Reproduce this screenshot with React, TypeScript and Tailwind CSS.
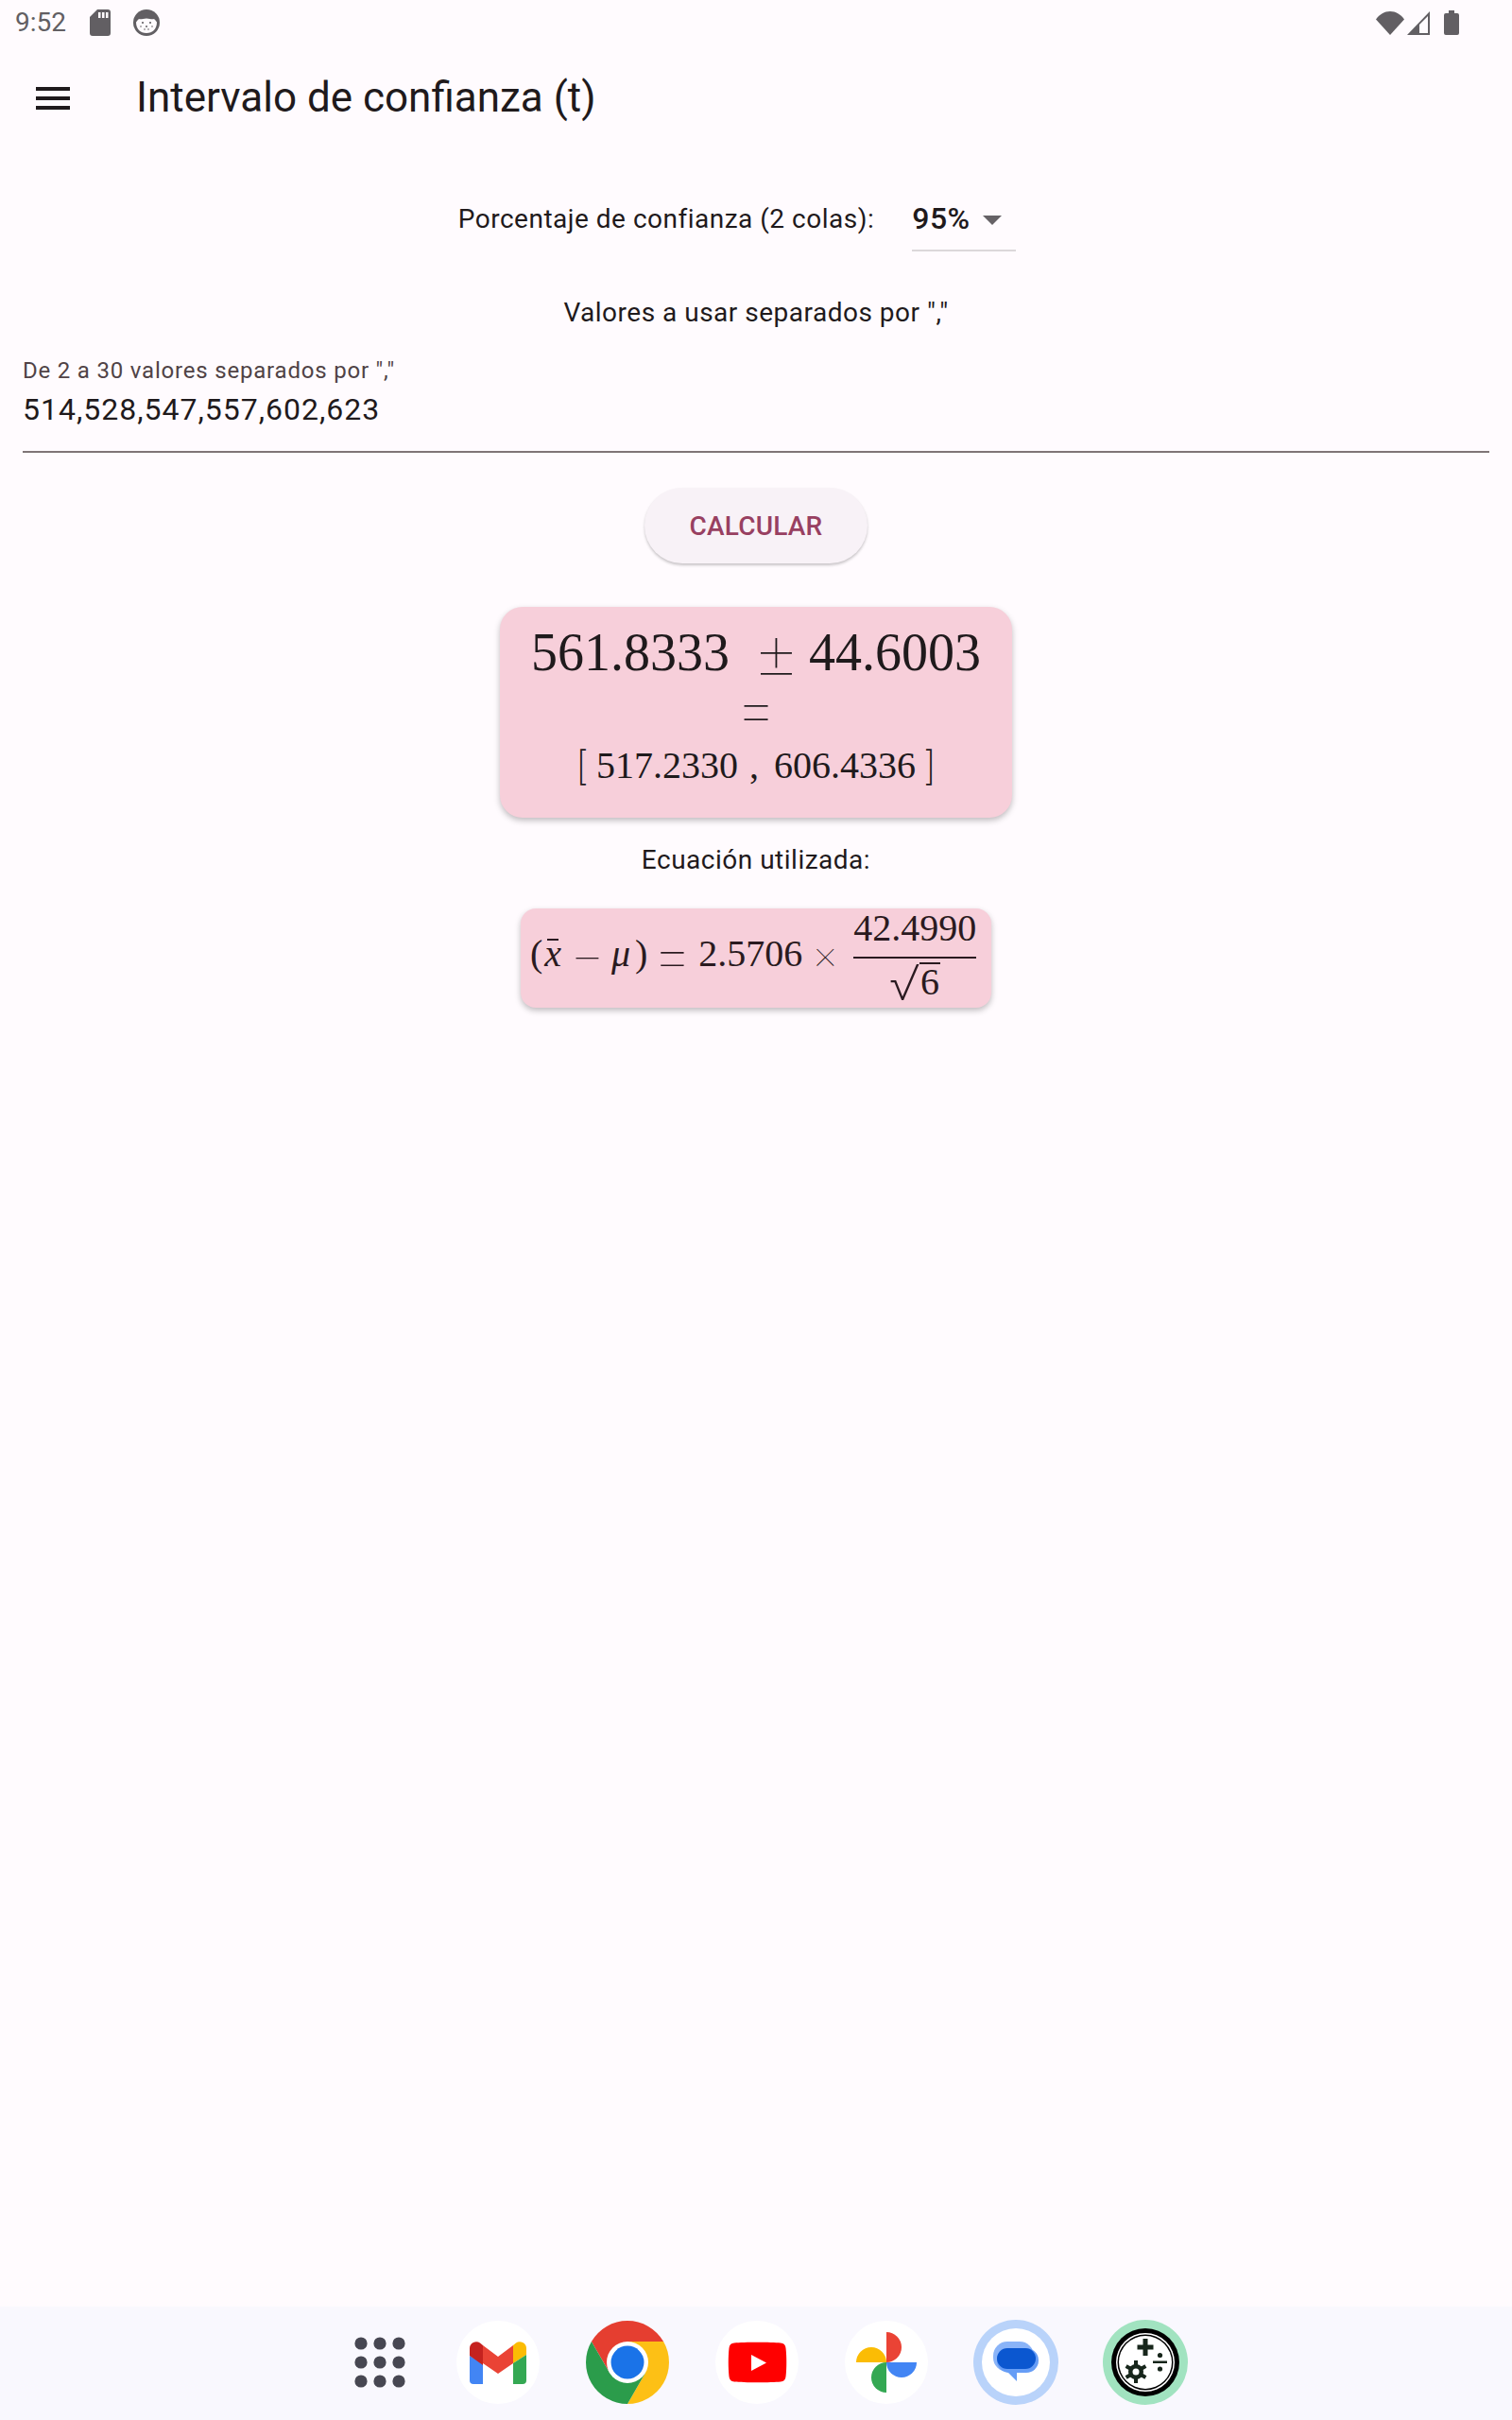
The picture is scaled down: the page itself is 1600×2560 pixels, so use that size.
import React from "react";

const Sd = () => (
  <svg width="22" height="28" viewBox="0 0 22 28" className="ml-[25px]">
    <path fillRule="evenodd" fill="#625f63" d="M8 0H19a3 3 0 0 1 3 3V25a3 3 0 0 1-3 3H3a3 3 0 0 1-3-3V8ZM9 3v6h2.500V3ZM13 3v6h2.500V3ZM17 3v6h2.500V3Z" />
  </svg>
);

const Face = () => (
  <svg width="28" height="28" viewBox="0 0 28 28" className="ml-[24px]">
    <circle cx="14" cy="14" r="14" fill="#625f63" />
    <path d="M3 13.500c1-1.500 2-2.500 3-3.500 2 1 4.500-.5 8-.5s6 1.500 8 .5c1 1 2 2 3 3.500 0 7-4.500 11.500-11 11.500S3 20.500 3 13.500Z" fill="#fffbfe" />
    <g fill="#625f63">
      <circle cx="10" cy="14" r="1.100" />
      <circle cx="18" cy="14" r="1.100" />
      <circle cx="14" cy="18" r="1" />
      <circle cx="8" cy="18" r=".8" />
      <circle cx="20" cy="18" r=".8" />
      <circle cx="12" cy="21" r=".8" />
      <circle cx="16" cy="21" r=".8" />
    </g>
  </svg>
);

const StatusRight = () => (
  <div className="flex items-center">
    <svg width="30" height="25" viewBox="0 0 30 25">
      <path d="M0 8.500C4 3 9 0 15 0s11 3 15 8.500L15 25Z" fill="#625f63" />
    </svg>
    <svg width="24" height="25" viewBox="0 0 24 25" className="ml-[3px]">
      <path fillRule="evenodd" d="M24 0V25H0ZM22 5 13 14V23H22Z" fill="#625f63" />
    </svg>
    <svg width="16" height="26" viewBox="0 0 16 26" className="ml-[15px]">
      <path d="M5 0H11V3H14a2 2 0 0 1 2 2V24a2 2 0 0 1-2 2H2a2 2 0 0 1-2-2V5a2 2 0 0 1 2-2H5Z" fill="#625f63" />
    </svg>
  </div>
);

const AppsGrid = () => (
  <svg width="88" height="88" viewBox="0 0 88 88">
    {[24, 44, 64].flatMap((y) =>
      [24, 44, 64].map((x) => <circle key={`${x}-${y}`} cx={x} cy={y} r="6.600" fill="#474752" />)
    )}
  </svg>
);

const Gmail = () => (
  <svg width="88" height="88" viewBox="0 0 88 88">
    <circle cx="44" cy="44" r="44" fill="#ffffff" />
    <path d="M14 37V63a4 4 0 0 0 4 4H28V45Z" fill="#4285f4" />
    <path d="M14 37V29a7 7 0 0 1 11-5.500L28 26V47Z" fill="#c5221f" />
    <path d="M28 26 44 38 60 26V45L44 56 28 45Z" fill="#ea4335" />
    <path d="M60 26 63 23.500A7 7 0 0 1 74 29V36L60 45Z" fill="#fbbc04" />
    <path d="M60 45 74 36V63a4 4 0 0 1-4 4H60Z" fill="#34a853" />
  </svg>
);

const Chrome = () => (
  <svg width="88" height="88" viewBox="0 0 88 88">
    <path d="M82.100 22A44 44 0 0 0 5.900 22L25 55 44 44Z" fill="#e53e30" />
    <path d="M82.100 22A44 44 0 0 1 44 88L63 55 44 22Z" fill="#fdc015" />
    <path d="M44 88A44 44 0 0 1 5.900 22L25 55H63Z" fill="#2b9c4b" />
    <circle cx="44" cy="44" r="22" fill="#ffffff" />
    <circle cx="44" cy="44" r="17.500" fill="#1a73e8" />
  </svg>
);

const YouTube = () => (
  <svg width="88" height="88" viewBox="0 0 88 88">
    <circle cx="44" cy="44" r="44" fill="#ffffff" />
    <path d="M20 23.500C30 22.500 59 22.500 69 23.500a6 6 0 0 1 5.500 5.500c1 8 1 22 0 30a6 6 0 0 1-5.500 5.500C59 65.500 30 65.500 20 64.500a6 6 0 0 1-5.500-5.500c-1-8-1-22 0-30A6 6 0 0 1 20 23.500Z" fill="#ff0000" />
    <path d="M38 36 54 44.500 38 53Z" fill="#ffffff" />
  </svg>
);

const Photos = () => (
  <svg width="88" height="88" viewBox="0 0 88 88">
    <circle cx="44" cy="44" r="44" fill="#ffffff" />
    <path d="M44 44V12a16 16 0 0 1 0 32Z" fill="#ea4335" />
    <path d="M44 44H76a16 16 0 0 1-32 0Z" fill="#4285f4" />
    <path d="M44 44V76a16 16 0 0 1 0-32Z" fill="#34a853" />
    <path d="M12 44a16 16 0 0 1 32 0Z" fill="#fbbc04" />
  </svg>
);

const Messages = () => (
  <svg width="90" height="90" viewBox="0 0 90 90">
    <circle cx="45" cy="45" r="45" fill="#b9d3fa" />
    <circle cx="45" cy="45" r="36" fill="#ffffff" />
    <rect x="21" y="23" width="43" height="32" rx="15" fill="#8ab4f8" />
    <rect x="25" y="30" width="44" height="26" rx="13" fill="#669df6" />
    <path d="M36 55 46 65V54Z" fill="#669df6" />
    <rect x="25" y="30" width="41" height="22" rx="11" fill="#0b57d0" />
  </svg>
);

const CalcLogo = () => (
  <svg width="90" height="90" viewBox="0 0 90 90">
    <circle cx="45" cy="45" r="45" fill="#a1e3c0" />
    <circle cx="45" cy="45" r="36" fill="#000000" />
    <circle cx="45" cy="45" r="31" fill="#ffffff" />
    <circle cx="45" cy="45" r="29.500" fill="#000000" />
    <circle cx="45" cy="45" r="28" fill="#ffffff" />
    <path d="M42.500 20H47.500V26.500H53.500V31.500H47.500V38H42.500V31.500H36.500V26.500H42.500Z" fill="#17261b" />
    <rect x="53" y="43.500" width="15" height="2.500" fill="#17261b" />
    <circle cx="60.500" cy="37.500" r="2.600" fill="#17261b" />
    <circle cx="60.500" cy="52" r="2.600" fill="#17261b" />
    <g stroke="#17261b" strokeWidth="4">
      <path d="M35 43V67" />
      <path d="M24.600 49 45.400 61" />
      <path d="M24.600 61 45.400 49" />
    </g>
    <circle cx="35" cy="55" r="8" fill="#17261b" />
    <circle cx="35" cy="55" r="3.500" fill="#ffffff" />
  </svg>
);

const Sqrt6 = () => (
  <span className="mt-[4px] flex items-start">
    <span className="text-[52px] leading-[44px] font-['Inter'] font-extralight">√</span>
    <span className="border-t-[2px] border-[#2a1a20] px-[1px] leading-[38px] h-[40px]">6</span>
  </span>
);

export default function App() {
  return (
    <div className="min-h-[2560px] flex flex-col bg-[#fffbfe] font-['Roboto',sans-serif] text-[#1f1a1c]">
      <div className="h-[48px] flex items-center justify-between pl-[16px] pr-[56px]">
        <div className="flex items-center">
          <span className="text-[28px] leading-none text-[#625f63]">9:52</span>
          <Sd />
          <Face />
        </div>
        <StatusRight />
      </div>

      <div className="h-[112px] flex items-center">
        <div className="ml-[38px] flex flex-col gap-[6px] w-[36px]">
          <div className="h-[4px] bg-[#1f1a1c]" />
          <div className="h-[4px] bg-[#1f1a1c]" />
          <div className="h-[4px] bg-[#1f1a1c]" />
        </div>
        <h1 className="ml-[70px] text-[44px] leading-none -mt-[2px] font-normal">Intervalo de confianza (t)</h1>
      </div>

      <div className="mt-[40px] h-[64px] flex items-start justify-center pr-[40px]">
        <span className="mt-[14px] text-[28px] leading-[36px] tracking-[0.5px]">Porcentaje de confianza (2 colas):</span>
        <div className="ml-[40px] w-[110px] h-[66px] border-b-2 border-[#dcd8da] flex items-start">
          <span className="mt-[13px] text-[32px] leading-[36px] font-medium tracking-[0.5px]">95%</span>
          <span className="ml-[13px] mt-[28px] w-0 h-0 border-x-[10px] border-x-transparent border-t-[10px] border-t-[#666266]" />
        </div>
      </div>

      <div className="mt-[49px] h-[36px] text-center text-[28px] leading-[36px] tracking-[0.5px]">Valores a usar separados por ","</div>

      <div className="mx-[24px] mt-[13px] border-b-2 border-[#7f7577] h-[117px] pt-[14px]">
        <div className="text-[24px] leading-[32px] tracking-[0.8px] text-[#504346]">De 2 a 30 valores separados por ","</div>
        <div className="mt-[5px] text-[32px] leading-[40px] tracking-[1px]">514,528,547,557,602,623</div>
      </div>

      <div className="mt-[37px] flex justify-center">
        <button className="w-[236px] h-[80px] pt-[1px] rounded-full bg-[#f8f2f7] text-[28px] font-medium tracking-[0.2px] text-[#984061] shadow-[0_2px_3px_rgba(0,0,0,0.22)]">CALCULAR</button>
      </div>

      <div className="mt-[46px] flex justify-center">
        <div className="w-[542px] h-[223px] rounded-[24px] bg-[#f7cfda] shadow-[0_3px_6px_rgba(0,0,0,0.25)] flex flex-col items-center font-['Liberation_Serif',serif] text-[#1f1a1c]">
          <div className="mt-[16px] h-[64px] flex items-center text-[56px] leading-[64px]">
            <span>561.8333</span>
            <span className="ml-[24px] mr-[9px] font-['Inter'] text-[80px] font-thin leading-[64px]">±</span>
            <span>44.6003</span>
          </div>
          <div className="mt-[10px] h-[32px] flex items-center font-['Inter'] text-[74px] font-thin leading-[32px]">=</div>
          <div className="mt-[16px] h-[60px] flex items-center text-[40px] leading-[60px]">
            <span className="text-[42px] font-['Inter'] font-extralight mr-[8px]">[</span>
            <span>517.2330</span>
            <span className="ml-[12px] mr-[16px]">,</span>
            <span>606.4336</span>
            <span className="text-[42px] font-['Inter'] font-extralight ml-[8px]">]</span>
          </div>
        </div>
      </div>

      <div className="mt-[27px] h-[36px] text-center text-[28px] leading-[36px] tracking-[0.5px]">Ecuación utilizada:</div>

      <div className="mt-[33px] flex justify-center">
        <div className="w-[498px] h-[105px] rounded-[16px] bg-[#f7cfda] shadow-[0_3px_6px_rgba(0,0,0,0.25)] flex items-center pl-[10px] pb-[10px] font-['Liberation_Serif',serif] text-[40px] leading-[46px] text-[#2a1a20]">
          <span className="font-light">(</span>
          <span className="ml-[2px] italic relative">
            x
            <span className="absolute left-[3px] right-[3px] top-[7px] h-[2px] bg-[#2a1a20]" />
          </span>
          <span className="ml-[9px] font-['Inter'] text-[58px] font-thin">−</span>
          <span className="ml-[7px] mr-[5px] italic">μ</span>
          <span>)</span>
          <span className="ml-[3px] font-['Inter'] text-[72px] font-thin">=</span>
          <span className="ml-[5px]">2.5706</span>
          <span className="ml-[10px] font-['Inter'] text-[44px] font-thin">×</span>
          <div className="ml-[16px] self-start mt-[1px] flex flex-col items-center">
            <span className="leading-[40px] border-b-2 border-[#2a1a20] pb-[10px]">42.4990</span>
            <Sqrt6 />
          </div>
        </div>
      </div>

      <div className="mt-auto h-[120px] bg-[#f9f8fe] flex items-start justify-center pl-[14px] pt-[15px] gap-[49px]">
        <div className="-mr-[12px]"><AppsGrid /></div>
        <Gmail />
        <Chrome />
        <YouTube />
        <Photos />
        <div className="-mx-[1px] -mt-[1px]"><Messages /></div>
        <div className="-mx-[1px] -mt-[1px]"><CalcLogo /></div>
      </div>
    </div>
  );
}
